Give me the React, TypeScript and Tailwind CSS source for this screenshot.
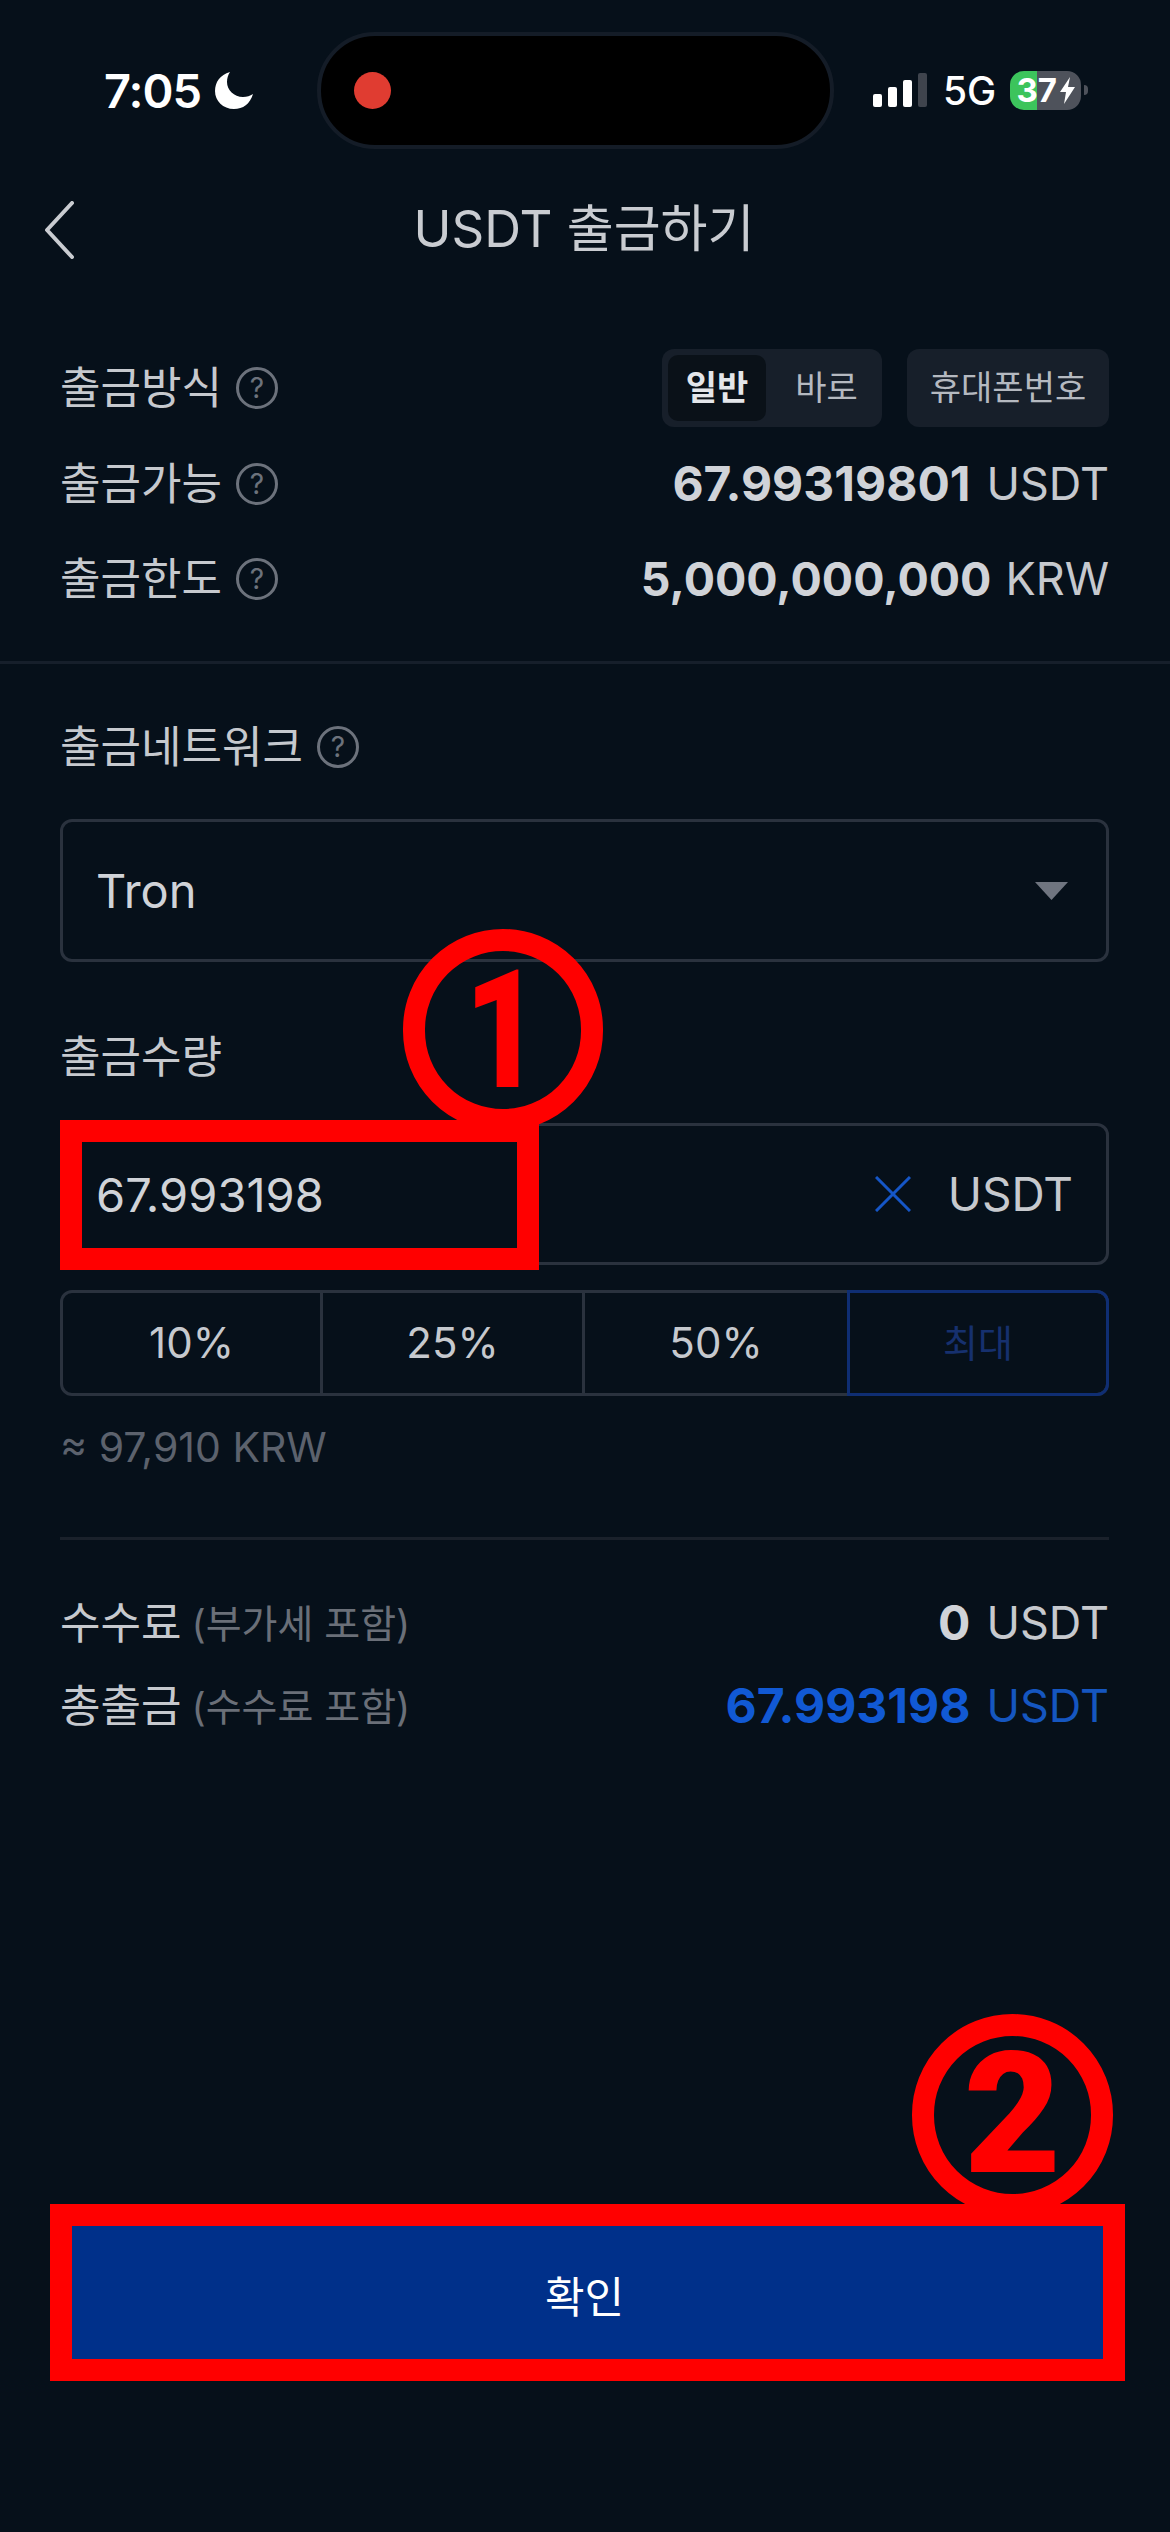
import React from 'react';

const FONT = "font-['Inter','Noto_Sans_CJK_KR',sans-serif]";

const HelpIcon = () => (
  <span className="ml-[14px] flex h-[42px] w-[42px] shrink-0 items-center justify-center rounded-full border-[3px] border-[#6c727c] text-[28px] leading-none text-[#6c727c]">
    ?
  </span>
);

const Label: React.FC<{ text: string; help?: boolean }> = ({ text, help }) => (
  <div className="flex items-center">
    <span className="text-[44px] leading-[44px] text-[#c6c9ce]">{text}</span>
    {help && <HelpIcon />}
  </div>
);

const Amount: React.FC<{ value: string; unit: string; blue?: boolean; small?: boolean }> = ({ value, unit, blue, small }) => (
  <div className={`flex items-center leading-[48px] ${small ? 'gap-[14px]' : 'gap-[16px]'} ${blue ? 'text-[#1159d4]' : 'text-[#d0d3d8]'}`}>
    <span className={`font-bold ${small ? 'text-[46.5px]' : 'text-[48px]'}`}>{value}</span>
    <span className={`text-[45px] ${blue ? 'text-[#1556c0]' : 'text-[#c6c9ce]'}`}>{unit}</span>
  </div>
);

const StatusBar = () => (
  <div className="flex h-[180px] items-center">
    <div className="flex w-[317px] items-center pl-[104px]">
      <span className="text-[47px] font-semibold leading-none tracking-[-1px] text-white">7:05</span>
      <svg className="ml-[14px]" width="38" height="37" viewBox="0 0 38 37" fill="#ffffff">
        <path d="M15 0C5 3 0 10 0 19C0 29 8 37 19 37C28 37 35 32 38 22C35 24 32 25 28 25C19 25 12 18 12 10C12 6 13 3 15 0Z" />
      </svg>
    </div>
    <div className="flex h-[117px] w-[517px] items-center rounded-[58px] border-[4px] border-[#141c27] bg-black pl-[33px]">
      <span className="h-[37px] w-[37px] rounded-full bg-[#e03c31]" />
    </div>
    <div className="flex items-center pl-[39px]">
      <div className="flex items-end gap-[6px]">
        <span className="h-[13px] w-[9px] rounded-[2px] bg-white" />
        <span className="h-[20px] w-[9px] rounded-[2px] bg-white" />
        <span className="h-[27px] w-[9px] rounded-[2px] bg-white" />
        <span className="h-[34px] w-[9px] rounded-[2px] bg-[#3f444d]" />
      </div>
      <span className="ml-[16px] text-[39px] font-medium leading-none text-white">5G</span>
      <div className="ml-[14px] flex h-[39px] w-[71px] items-center justify-center rounded-[14px] bg-[linear-gradient(90deg,#3cc45c_38%,#4e525b_38%)] text-[33px] font-bold leading-none text-white">
        <span>37</span>
        <svg className="ml-[3px]" width="15" height="27" viewBox="0 0 15 27" fill="#ffffff">
          <path d="M10 0L0 15H6L4 27L15 10H8Z" />
        </svg>
      </div>
      <span className="ml-[3px] h-[10px] w-[4px] rounded-r-full bg-[#4e525b]" />
    </div>
  </div>
);

const App = () => {
  return (
    <div className={`relative flex h-[2532px] w-[1170px] flex-col overflow-hidden bg-[#06101a] ${FONT}`}>
      <StatusBar />

      {/* header */}
      <div className="relative flex h-[96px] items-center justify-center pr-[2px]">
        <svg className="absolute left-[43px] top-[21px]" width="32" height="58" viewBox="0 0 32 58" fill="none">
          <path d="M29 2L4 29L29 56" stroke="#c9ccd1" strokeWidth="4" strokeLinecap="round" strokeLinejoin="round" />
        </svg>
        <span className="text-[51px] leading-none text-[#c9ccd1]">USDT 출금하기</span>
      </div>

      {/* withdraw info */}
      <div className="flex flex-col gap-[17.5px] pl-[60px] pr-[61px] pt-[73px]">
        <div className="flex h-[78px] items-center justify-between">
          <Label text="출금방식" help />
          <div className="flex gap-[25px]">
            <div className="flex h-[78px] w-[220px] items-center rounded-[12px] bg-[#171f2a] pl-[6px] text-[34px] leading-none">
              <span className="flex h-[66px] w-[98px] items-center justify-center rounded-[10px] bg-[#0a1118] font-bold text-[#e4e6ea]">일반</span>
              <span className="flex flex-1 items-center justify-center pl-[5px] text-[#b5b9c0]">바로</span>
            </div>
            <div className="flex h-[78px] w-[202px] items-center justify-center rounded-[12px] bg-[#171f2a] text-[34px] leading-none text-[#b5b9c0]">
              휴대폰번호
            </div>
          </div>
        </div>
        <div className="flex h-[78px] items-center justify-between">
          <Label text="출금가능" help />
          <Amount value="67.99319801" unit="USDT" />
        </div>
        <div className="flex h-[78px] items-center justify-between">
          <Label text="출금한도" help />
          <Amount value="5,000,000,000" unit="KRW" small />
        </div>
      </div>

      <div className="mt-[43px] h-[3px] bg-[#161f2b]" />

      {/* form */}
      <div className="flex flex-col pl-[60px] pr-[61px]">
        <div className="mt-[61px]">
          <Label text="출금네트워크" help />
        </div>
        <div className="mt-[50px] flex h-[143px] items-center justify-between rounded-[12px] border-[3px] border-[#2a323e] pl-[33px] pr-[38px]">
          <span className="text-[47px] leading-none text-[#d0d3d8]">Tron</span>
          <svg width="33" height="18" viewBox="0 0 33 18" fill="#6f7580">
            <path d="M0 0H33L16.5 18Z" />
          </svg>
        </div>

        <div className="mt-[73px]">
          <Label text="출금수량" />
        </div>
        <div className="mt-[44px] flex h-[142px] items-center rounded-[12px] border-[3px] border-[#2a323e] pl-[33px] pr-[33px]">
          <span className="text-[47px] leading-none text-[#d0d3d8]">67.993198</span>
          <svg className="ml-auto" width="36" height="36" viewBox="0 0 36 36" fill="none">
            <path d="M1 1L35 35M35 1L1 35" stroke="#1556c7" strokeWidth="3" />
          </svg>
          <span className="ml-[37px] text-[46px] leading-none text-[#c6c9ce]">USDT</span>
        </div>

        <div className="mt-[25px] flex h-[106px] rounded-[12px] border-[3px] border-[#2a323e] text-[42px] leading-none text-[#c6c9ce]">
          <div className="flex w-[260px] items-center justify-center border-r-[3px] border-[#2a323e]">10%</div>
          <div className="flex w-[262px] items-center justify-center border-r-[3px] border-[#2a323e]">25%</div>
          <div className="flex w-[262px] items-center justify-center">50%</div>
          <div className="-my-[3px] -mr-[3px] flex flex-1 items-center justify-center rounded-r-[12px] border-[3px] border-[#0f2e73] text-[38px] text-[#16306e]">
            최대
          </div>
        </div>

        <div className="mt-[29px] h-[44px] text-[41px] leading-[44px] text-[#5c626d]">≈ 97,910 KRW</div>

        <div className="mt-[68px] h-[3px] bg-[#1a212b]" />

        <div className="mt-[59px] flex h-[48px] items-center justify-between">
          <div className="flex items-center">
            <span className="text-[44px] leading-[44px] text-[#c6c9ce]">수수료</span>
            <span className="ml-[10px] text-[39px] leading-none text-[#6a6f78]">(부가세 포함)</span>
          </div>
          <Amount value="0" unit="USDT" />
        </div>
        <div className="mt-[35px] flex h-[48px] items-center justify-between">
          <div className="flex items-center">
            <span className="text-[44px] leading-[44px] text-[#c6c9ce]">총출금</span>
            <span className="ml-[10px] text-[39px] leading-none text-[#6a6f78]">(수수료 포함)</span>
          </div>
          <Amount value="67.993198" unit="USDT" blue />
        </div>
      </div>

      {/* confirm, with its red outline */}
      <div className="mb-[151px] ml-[50px] mt-auto flex h-[177px] w-[1075px] items-center justify-center border-[22px] border-[#ff0000] bg-[#00308a] pr-[6px] pt-[10px] text-[43px] leading-none text-white">
        확인
      </div>

      {/* red annotations */}
      <div className="absolute left-[403px] top-[929px] flex h-[202px] w-[200px] items-center justify-center rounded-full border-[22px] border-[#ff0000] font-['Roboto',sans-serif] text-[165px] font-black leading-none text-[#ff0000]">
        <span className="inline-block scale-x-[0.8]">1</span>
      </div>
      <div className="absolute left-[60px] top-[1120px] h-[150px] w-[479px] border-[22px] border-[#ff0000]" />
      <div className="absolute left-[912px] top-[2014px] flex h-[202px] w-[201px] items-center justify-center rounded-full border-[22px] border-[#ff0000] font-['Roboto',sans-serif] text-[168px] font-black leading-none text-[#ff0000]">
        2
      </div>
    </div>
  );
};

export default App;
